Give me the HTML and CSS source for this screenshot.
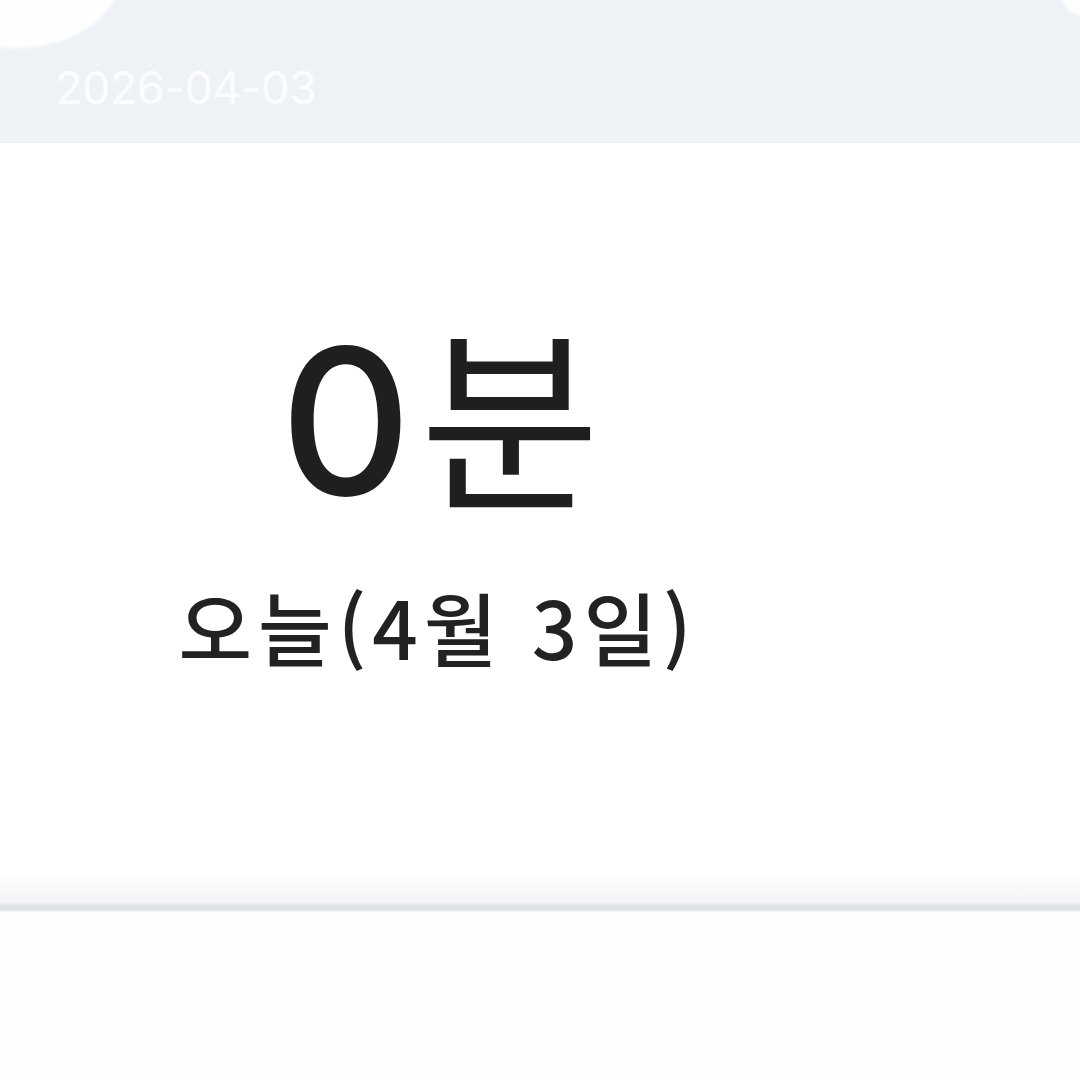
FILE: index.html
```html
<!DOCTYPE html>
<html lang="ko">
<head>
<meta charset="utf-8">
<link rel="stylesheet" href="styles.css">
</head>
<body>
<div class="page">
  <header class="topbar">
    <div class="blob blob-left"></div>
    <div class="blob blob-right"></div>
    <span class="date">2026-04-03</span>
  </header>
  <main class="card">
    <section class="summary">
      <div class="big"><span class="num">0</span><span class="unit">분</span></div>
      <div class="sub">오늘(4월 3일)</div>
    </section>
    <section class="side"></section>
  </main>
  <div class="divider"></div>
  <div class="rest"></div>
</div>
</body>
</html>
```
FILE: styles.css
```css
html, body {
  margin: 0;
  padding: 0;
  background: #ffffff;
}
.page {
  width: 1080px;
  height: 1080px;
  overflow: hidden;
  display: flex;
  flex-direction: column;
  font-family: "Noto Sans CJK KR", "Noto Sans", sans-serif;
}
.topbar {
  position: relative;
  height: 143px;
  flex: none;
  background: #eef2f7;
  box-sizing: border-box;
  padding: 58px 0 0 55px;
  overflow: hidden;
}
.blob {
  position: absolute;
  background: #fdfefd;
  border-radius: 50%;
  filter: blur(1.5px);
}
.blob-left {
  left: -90px;
  top: -95px;
  width: 210px;
  height: 143px;
}
.blob-right {
  right: -30px;
  top: -34px;
  width: 50px;
  height: 50px;
}
.date {
  display: block;
  font-family: Inter, "Noto Sans", sans-serif;
  font-size: 45px;
  line-height: 60px;
  color: #fbfcfd;
  letter-spacing: -0.5px;
}
.card {
  flex: none;
  height: 737px;
  display: grid;
  grid-template-columns: 876px 1fr;
  background: linear-gradient(#ffffff 0, #ffffff 730px, #fafafa 737px);
}
.summary {
  display: flex;
  flex-direction: column;
  align-items: center;
  padding-top: 157px;
}
.big {
  display: flex;
  align-items: baseline;
  gap: 6px;
  line-height: 220px;
  color: #1f1f1f;
  padding-left: 4px;
}
.num {
  font-family: Inter, "Noto Sans", sans-serif;
  font-size: 204px;
  font-weight: 500;
  letter-spacing: 2px;
}
.unit {
  font-family: "Noto Sans CJK KR", sans-serif;
  font-size: 196px;
  font-weight: 400;
}
.sub {
  margin-top: 44px;
  font-size: 80px;
  line-height: 100px;
  letter-spacing: 6px;
  color: #222222;
  font-weight: 500;
}
.divider {
  flex: none;
  height: 32px;
  background: linear-gradient(#fbfbfb 0, #f4f5f6 22px, #dfe3e8 26px, #dde1e6 29px, #f7f8f9 32px);
}
.rest {
  flex: 1;
  background: #fefefe;
}
```
